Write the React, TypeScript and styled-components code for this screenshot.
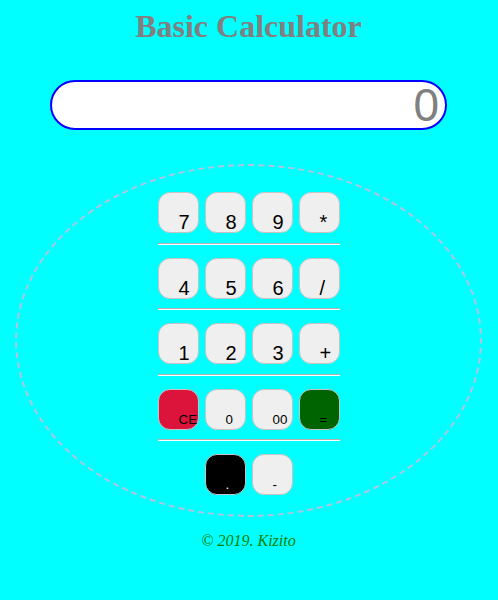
import React from "react";
import styled, { createGlobalStyle } from "styled-components";

const Global = createGlobalStyle`
  html, body { margin: 0; padding: 0; background: #00ffff; }
  body { font-family: "Liberation Serif", "Times New Roman", serif; }
`;

const Page = styled.div`
  display: flex;
  flex-direction: column;
  align-items: center;
  padding: 8px 1px 0 0;
`;

const Title = styled.h1`
  margin: 0;
  font-family: "Liberation Serif", "Times New Roman", serif;
  font-size: 32px;
  line-height: 36px;
  font-weight: bold;
  color: #808080;
`;

const Display = styled.input`
  box-sizing: border-box;
  margin-top: 36px;
  width: 397px;
  height: 50px;
  border: 2px solid #0000ff;
  border-radius: 25px;
  background: #ffffff;
  padding: 0 6px 0 10px;
  text-align: right;
  font-family: "Liberation Sans Narrow", "Liberation Sans", Arial, sans-serif;
  font-size: 46px;
  color: #808080;
  outline: none;
`;

const Pad = styled.div`
  box-sizing: border-box;
  margin-top: 34px;
  width: 467px;
  height: 353px;
  border: 2px dashed #b0c4de;
  border-radius: 50%;
  padding: 26px 0 20px;
  display: flex;
  flex-direction: column;
  align-items: center;
`;

const Row = styled.div`
  display: flex;
  justify-content: center;
  gap: 6px;
  width: 182px;
  height: 41px;
`;

const Divider = styled.div`
  width: 182px;
  height: 0;
  border-top: 1px solid #b4b0b0;
  border-bottom: 1px solid #ffffff;
  margin: 9.5px 0 13px;
`;

type KeyProps = { $bg?: string; $fg?: string; $big?: boolean };

const Key = styled.button<KeyProps>`
  box-sizing: border-box;
  width: 41px;
  height: 41px;
  flex: none;
  border: 1px solid #c4c4c4;
  border-radius: 12px;
  background: ${(p) => p.$bg || "#efefef"};
  color: ${(p) => p.$fg || "#000000"};
  padding: 20px 0 0 20px;
  display: flex;
  align-items: center;
  justify-content: flex-start;
  font-family: "Liberation Sans", Arial, sans-serif;
  font-size: ${(p) => (p.$big ? "20px" : "13.333px")};
  white-space: nowrap;
  overflow: visible;
  cursor: pointer;
`;

const Footer = styled.p`
  margin: 15px 0 0;
  font-family: "Liberation Serif", "Times New Roman", serif;
  font-style: italic;
  font-size: 16px;
  color: #008000;
`;

type K = { label: string; bg?: string; fg?: string; big?: boolean };

const rows: K[][] = [
  [
    { label: "7", big: true },
    { label: "8", big: true },
    { label: "9", big: true },
    { label: "*", big: true },
  ],
  [
    { label: "4", big: true },
    { label: "5", big: true },
    { label: "6", big: true },
    { label: "/", big: true },
  ],
  [
    { label: "1", big: true },
    { label: "2", big: true },
    { label: "3", big: true },
    { label: "+", big: true },
  ],
  [
    { label: "CE", bg: "#dc143c" },
    { label: "0" },
    { label: "00" },
    { label: "=", bg: "#006400" },
  ],
  [
    { label: ".", bg: "#000000", fg: "#ffffff" },
    { label: "-" },
  ],
];

export default function App() {
  return (
    <>
      <Global />
      <Page>
        <Title>Basic Calculator</Title>
        <Display readOnly value="0" />
        <Pad>
          {rows.map((r, i) => (
            <React.Fragment key={i}>
              <Row>
                {r.map((k) => (
                  <Key key={k.label} $bg={k.bg} $fg={k.fg} $big={k.big}>
                    {k.label}
                  </Key>
                ))}
              </Row>
              {i < rows.length - 1 && <Divider />}
            </React.Fragment>
          ))}
        </Pad>
        <Footer>© 2019. Kizito</Footer>
      </Page>
    </>
  );
}
